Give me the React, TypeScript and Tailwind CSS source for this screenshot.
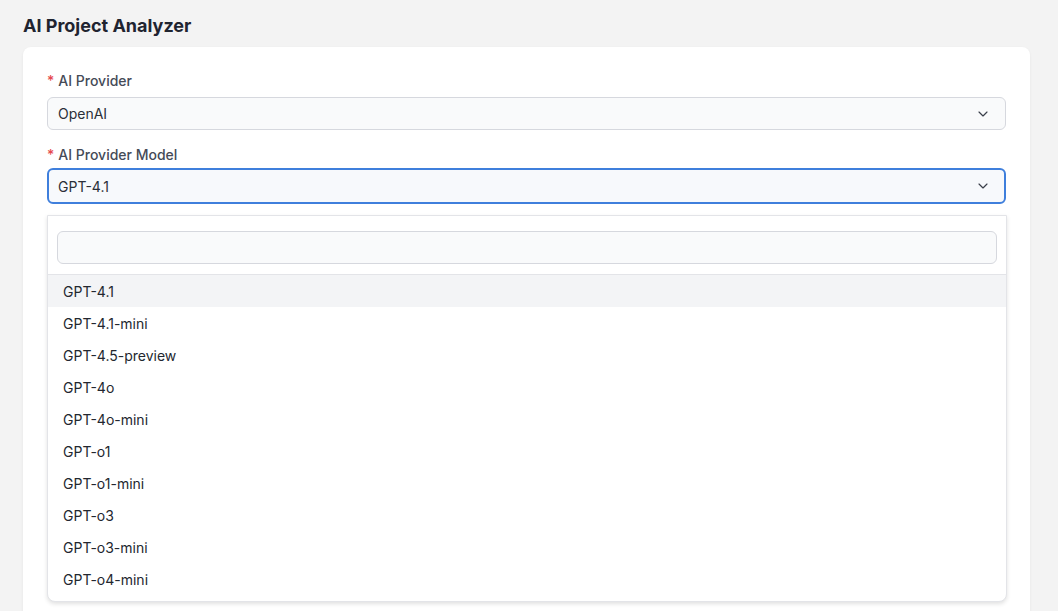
import { ChevronDown } from 'lucide-react';

const models = [
  'GPT-4.1',
  'GPT-4.1-mini',
  'GPT-4.5-preview',
  'GPT-4o',
  'GPT-4o-mini',
  'GPT-o1',
  'GPT-o1-mini',
  'GPT-o3',
  'GPT-o3-mini',
  'GPT-o4-mini',
];

function Label({ text }: { text: string }) {
  return (
    <div className="flex items-center gap-1 text-[14px] font-medium text-[#454b57] leading-5">
      <span className="text-[#e5484d]">*</span>
      <span>{text}</span>
    </div>
  );
}

export default function App() {
  return (
    <div
      className="min-h-screen h-[611px] overflow-hidden bg-[#f3f3f3] pl-[23px] pr-[28px] pt-[14px]"
      style={{ fontFamily: 'Inter, "Noto Sans", sans-serif' }}
    >
      <h1 className="text-[18px] font-bold text-[#1f2430] leading-6">AI Project Analyzer</h1>

      <div className="mt-[9px] rounded-lg bg-white px-6 pt-[24px] pb-6 shadow-[0_1px_3px_rgba(0,0,0,0.06)]">
        {/* provider */}
        <Label text="AI Provider" />
        <div className="mt-[6px] flex h-[33px] items-center justify-between rounded-md border border-[#d6d8de] bg-[#f9fafb] pl-[10px] pr-[14px] text-[14px] text-[#2b2f38]">
          <span>OpenAI</span>
          <ChevronDown className="h-4 w-4 text-[#3a3f4a]" strokeWidth={1.75} />
        </div>

        {/* model */}
        <div className="mt-[15px]">
          <Label text="AI Provider Model" />
        </div>
        <div className="mt-[3px] flex h-[36px] items-center justify-between rounded-md border-2 border-[#3f7fdc] bg-[#f7f9fc] pl-[9px] pr-[13px] text-[14px] text-[#2b2f38]">
          <span>GPT-4.1</span>
          <ChevronDown className="h-4 w-4 text-[#3a3f4a]" strokeWidth={1.75} />
        </div>

        {/* dropdown */}
        <div className="mt-[11px] -mr-px rounded-b-lg border border-[#e3e4e8] bg-white shadow-[0_2px_4px_rgba(0,0,0,0.12)]">
          <div className="px-[9px] pt-[15px] pb-[10px]">
            <div className="h-[33px] rounded-md border border-[#d6d8de] bg-[#f9fafb]" />
          </div>
          <div className="border-t border-[#e3e4e8] pb-[6px]">
            {models.map((m, i) => (
              <div
                key={m}
                className={
                  'flex h-[32px] items-center px-[15px] text-[14px] text-[#23272f] ' +
                  (i === 0 ? 'bg-[#f3f4f6]' : '')
                }
              >
                {m}
              </div>
            ))}
          </div>
        </div>
      </div>
    </div>
  );
}
